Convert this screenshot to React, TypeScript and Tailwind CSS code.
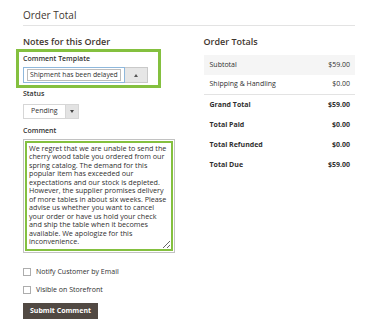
import React from "react";

const commentText = [
    "We regret that we are unable to send the",
    "cherry wood table you ordered from our",
    "spring catalog. The demand for this",
    "popular item has exceeded our",
    "expectations and our stock is depleted.",
    "However, the supplier promises delivery",
    "of more tables in about six weeks. Please",
    "advise us whether you want to cancel",
    "your order or have us hold your check",
    "and ship the table when it becomes",
    "available. We apologize for this",
    "inconvenience.",
].join("\n");

type TotalRow = { label: string; value: string; bold?: boolean; shaded?: boolean; divider?: boolean };

const totals: TotalRow[] = [
    { label: "Subtotal", value: "$59.00", shaded: true },
    { label: "Shipping & Handling", value: "$0.00", divider: true },
    { label: "Grand Total", value: "$59.00", bold: true },
    { label: "Total Paid", value: "$0.00", bold: true },
    { label: "Total Refunded", value: "$0.00", bold: true },
    { label: "Total Due", value: "$59.00", bold: true },
];

function Checkbox({ label }: { label: string }) {
    return (
        <label className="flex items-center gap-[5px] text-[7px] leading-[9px] text-[#303030]">
            <span className="h-[8px] w-[8px] border border-[#adadad] bg-white" />
            {label}
        </label>
    );
}

export default function App() {
    return (
        <div className="h-[328px] w-[374px] bg-white pl-[23px] pr-[19px] pt-[8px] text-[#303030]" style={{ fontFamily: '"Open Sans", "Liberation Sans", sans-serif' }}>
            <div className="border-b border-[#e3e3e3] pb-[3px] text-[10px] leading-[14px] text-[#41362f]">Order Total</div>

            <div className="mt-[10px] grid grid-cols-2 gap-[29px]">
                {/* notes */}
                <div className="flex flex-col">
                    <h2 className="text-[9px] font-semibold leading-[12px] text-[#41362f]">Notes for this Order</h2>

                    <div className="mt-[1px] -ml-[7px] w-[145px] border-[3px] border-[#84c03f] pt-[2px] pb-[2px] pl-[4px]">
                        <div className="text-[7px] font-semibold leading-[9px]">Comment Template</div>
                        <div className="mt-[4px] flex h-[16px] w-[125px]">
                            <div className="flex flex-1 items-center overflow-hidden border border-[#8fb8dc] bg-white px-[3px]">
                                <span className="whitespace-nowrap border border-[#bcbcbc] px-[2px] text-[6.8px] leading-[10px]">Shipment has been delayed</span>
                            </div>
                            <div className="flex w-[23px] items-center justify-center border border-l-0 border-[#c9c9c9] bg-[#e6e6e6]">
                                <svg width="4" height="3" viewBox="0 0 4 3"><path d="M0 3 L2 0 L4 3 Z" fill="#555" /></svg>
                            </div>
                        </div>
                    </div>

                    <div className="mt-[1px] text-[7px] font-semibold leading-[9px]">Status</div>
                    <div className="mt-[6px] flex h-[15px] w-[56px]">
                        <div className="flex flex-1 items-center border border-[#d6d6d6] bg-white pl-[7px] text-[7px]">Pending</div>
                        <div className="flex w-[13px] items-center justify-center border border-l-0 border-[#d6d6d6] bg-[#e3e3e3]">
                            <svg width="4" height="3" viewBox="0 0 4 3"><path d="M0 0 L4 0 L2 3 Z" fill="#444" /></svg>
                        </div>
                    </div>

                    <div className="mt-[7px] text-[7px] font-semibold leading-[9px]">Comment</div>
                    <div className="mt-[4px] h-[114px] w-[152px] border border-[#c2c2c2] p-[1px]">
                        <textarea
                            readOnly
                            value={commentText}
                            className="block h-full w-full resize-y overflow-hidden border-2 border-[#84c03f] px-[2px] pt-[1px] text-[7.2px] leading-[8.45px] text-[#303030] outline-none"
                            style={{ fontFamily: '"Open Sans", "Liberation Sans", sans-serif' }}
                        />
                    </div>

                    <div className="mt-[14px] flex flex-col gap-[9px]">
                        <Checkbox label="Notify Customer by Email" />
                        <Checkbox label="Visible on Storefront" />
                    </div>

                    <button className="mt-[9px] h-[16px] w-[75px] bg-[#514943] text-[7px] font-bold text-white">Submit Comment</button>
                </div>

                {/* totals */}
                <div className="flex flex-col">
                    <h2 className="text-[9px] font-semibold leading-[12px] text-[#41362f]">Order Totals</h2>
                    <div className="mt-[7px] flex flex-col">
                        {totals.map((row) => (
                            <div
                                key={row.label}
                                className={`flex h-[20px] items-center justify-between pl-[6px] pr-[5px] text-[7px] ${row.shaded ? "bg-[#f5f5f5]" : ""} ${row.divider ? "border-b border-[#e3e3e3]" : ""} ${row.bold ? "font-bold" : ""}`}
                            >
                                <span>{row.label}</span>
                                <span>{row.value}</span>
                            </div>
                        ))}
                    </div>
                </div>
            </div>
        </div>
    );
}
